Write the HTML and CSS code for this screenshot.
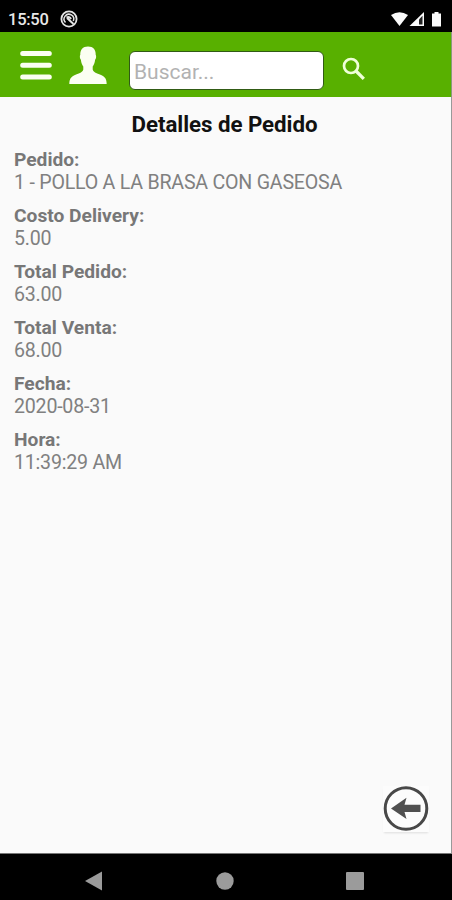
FILE: index.html
```html
<!DOCTYPE html>
<html lang="es">
<head>
<meta charset="utf-8">
<title>Detalles de Pedido</title>
<link rel="stylesheet" href="styles.css">
</head>
<body>
<div class="screen">
  <div class="status">
    <span class="clock">15:50</span>
    <svg class="notice" width="18" height="18" viewBox="0 0 18 18" fill="none" stroke="#e4e4e4"><circle cx="9" cy="9" r="7.600" stroke-width="1.800"/><path d="M5.500 12.500A4.800 4.800 0 1 1 13.300 11" stroke-width="1.500"/><path d="M6.500 7.500q3-1.500 4.500 1.500M7 8l6.500 6" stroke-width="2"/></svg>
    <svg class="signals" width="52" height="18" viewBox="0 0 52 18" fill="#fafafa"><path d="M0 4Q8.500-1.500 17 4L8.500 15z"/><path d="M33 1v14H18.500z"/><path d="M28 8.500l3.500-3.700V13.500H28z" fill="#222"/><path d="M43.500 1h4v1.500H50V15.500h-9V2.500h2.500z"/></svg>
  </div>
  <header class="toolbar">
    <svg class="menu" width="32" height="30" viewBox="0 0 32 30" fill="none" stroke="#fbfff2" stroke-width="5" stroke-linecap="round"><path d="M2.700 3.500h26.600M2.700 15.300h26.600M2.700 27h26.600"/></svg>
    <svg class="user" width="38" height="39" viewBox="0 0 38 39" fill="#fbfff2"><path d="M19 .5c5.300 0 7.900 3.300 7.700 8.300.8 1.100.5 4-.6 5-.3 3.500-1.300 5.200-2.400 6.600v3.100c.5 3 4.400 3.700 7.800 5.300 4.500 2.100 6 3.800 6.200 9.200H.3c.2-5.400 1.700-7.100 6.200-9.200 3.400-1.600 7.300-2.300 7.800-5.300v-3.100c-1.100-1.400-2.100-3.100-2.400-6.600-1.100-1-1.400-3.900-.6-5C11.100 3.800 13.700.5 19 .5z"/></svg>
    <input class="search" type="text" placeholder="Buscar..." aria-label="Buscar">
    <svg class="find" width="24" height="24" viewBox="0 0 24 24" fill="none" stroke="#efffd8"><circle cx="9" cy="9" r="7" stroke-width="2.700"/><path d="M14 14l7.800 7.800" stroke-width="3.300"/></svg>
  </header>
  <main class="content">
    <h1>Detalles de Pedido</h1>
    <dl>
      <div><dt>Pedido:</dt><dd>1 - POLLO A LA BRASA CON GASEOSA</dd></div>
      <div><dt>Costo Delivery:</dt><dd>5.00</dd></div>
      <div><dt>Total Pedido:</dt><dd>63.00</dd></div>
      <div><dt>Total Venta:</dt><dd>68.00</dd></div>
      <div><dt>Fecha:</dt><dd>2020-08-31</dd></div>
      <div><dt>Hora:</dt><dd>11:39:29 AM</dd></div>
    </dl>
    <button class="back" aria-label="Volver"><svg width="46" height="46" viewBox="0 0 46 46"><circle cx="23" cy="22.500" r="20.800" fill="none" stroke="#484848" stroke-width="3"/><path d="M8 22.500L23.500 11.800 21.500 18.800H37.500V26H21.500L23.500 33z" fill="#505050"/></svg></button>
  </main>
  <nav class="navbar">
    <svg width="18" height="20" viewBox="0 0 18 20" fill="#9b9b9b"><path d="M0 10L17 .5v19z"/></svg>
    <svg width="18" height="18" viewBox="0 0 18 18" fill="#9b9b9b"><circle cx="9" cy="9" r="8.700"/></svg>
    <svg width="18" height="18" viewBox="0 0 18 18" fill="#9b9b9b"><rect width="18" height="18" rx="1"/></svg>
  </nav>
</div>
</body>
</html>
```

FILE: styles.css
```css
* { box-sizing: border-box; }
body { margin: 0; font-family: Roboto, sans-serif; background: #000; }
.screen { width: 452px; height: 900px; display: flex; flex-direction: column; overflow: hidden; }
.status { height: 32px; flex: none; display: flex; align-items: flex-start; padding: 10px 9px 0 8px; background: #000; }
.clock { width: 52px; color: #e8e8e8; font-size: 16.5px; line-height: 19px; font-weight: 500; letter-spacing: -0.25px; }
.signals { margin: 1px 0 0 auto; }
.toolbar { height: 65px; flex: none; display: flex; align-items: flex-start; background: #58b000; border-right: 1px solid #8a9b7a; padding-left: 20px; }
.menu { margin-top: 18px; }
.user { margin: 14px 0 0 17px; }
.search { width: 195px; height: 39px; margin: 19px 0 0 22px; padding: 2px 4px 0; border: 1px solid #315b15; border-radius: 6px; background: #fff; font: 21px Roboto, sans-serif; color: #444; outline: 0; }
.search::placeholder { color: #b2b2b2; opacity: 1; }
.find { margin: 25px 0 0 18px; }
.content { flex: 1; display: flex; flex-direction: column; background: #fafafa; border-right: 1px solid #999; border-bottom: 1px solid #777; }
h1 { margin: 13px 0 0; padding-right: 2px; text-align: center; font-size: 22.3px; line-height: 28px; font-weight: 700; letter-spacing: -0.05px; color: #111; }
dl { margin: 10px 0 0 14px; display: grid; gap: 9px; }
dt, dd { margin: 0; color: #777; }
dt { font-size: 19.2px; line-height: 23px; font-weight: 700; }
dd { font-size: 19.6px; line-height: 24px; letter-spacing: -0.22px; color: #808080; }
.back { width: 46px; height: 46px; margin: auto 22px 21px auto; padding: 0; border: 0; background: #fcfcfc; box-shadow: 0 2px 2px -1px #ddd; }
.back svg { display: block; }
.navbar { height: 46px; flex: none; display: flex; align-items: center; gap: 112.5px; padding: 8px 0 0 85px; background: #000; }
```
